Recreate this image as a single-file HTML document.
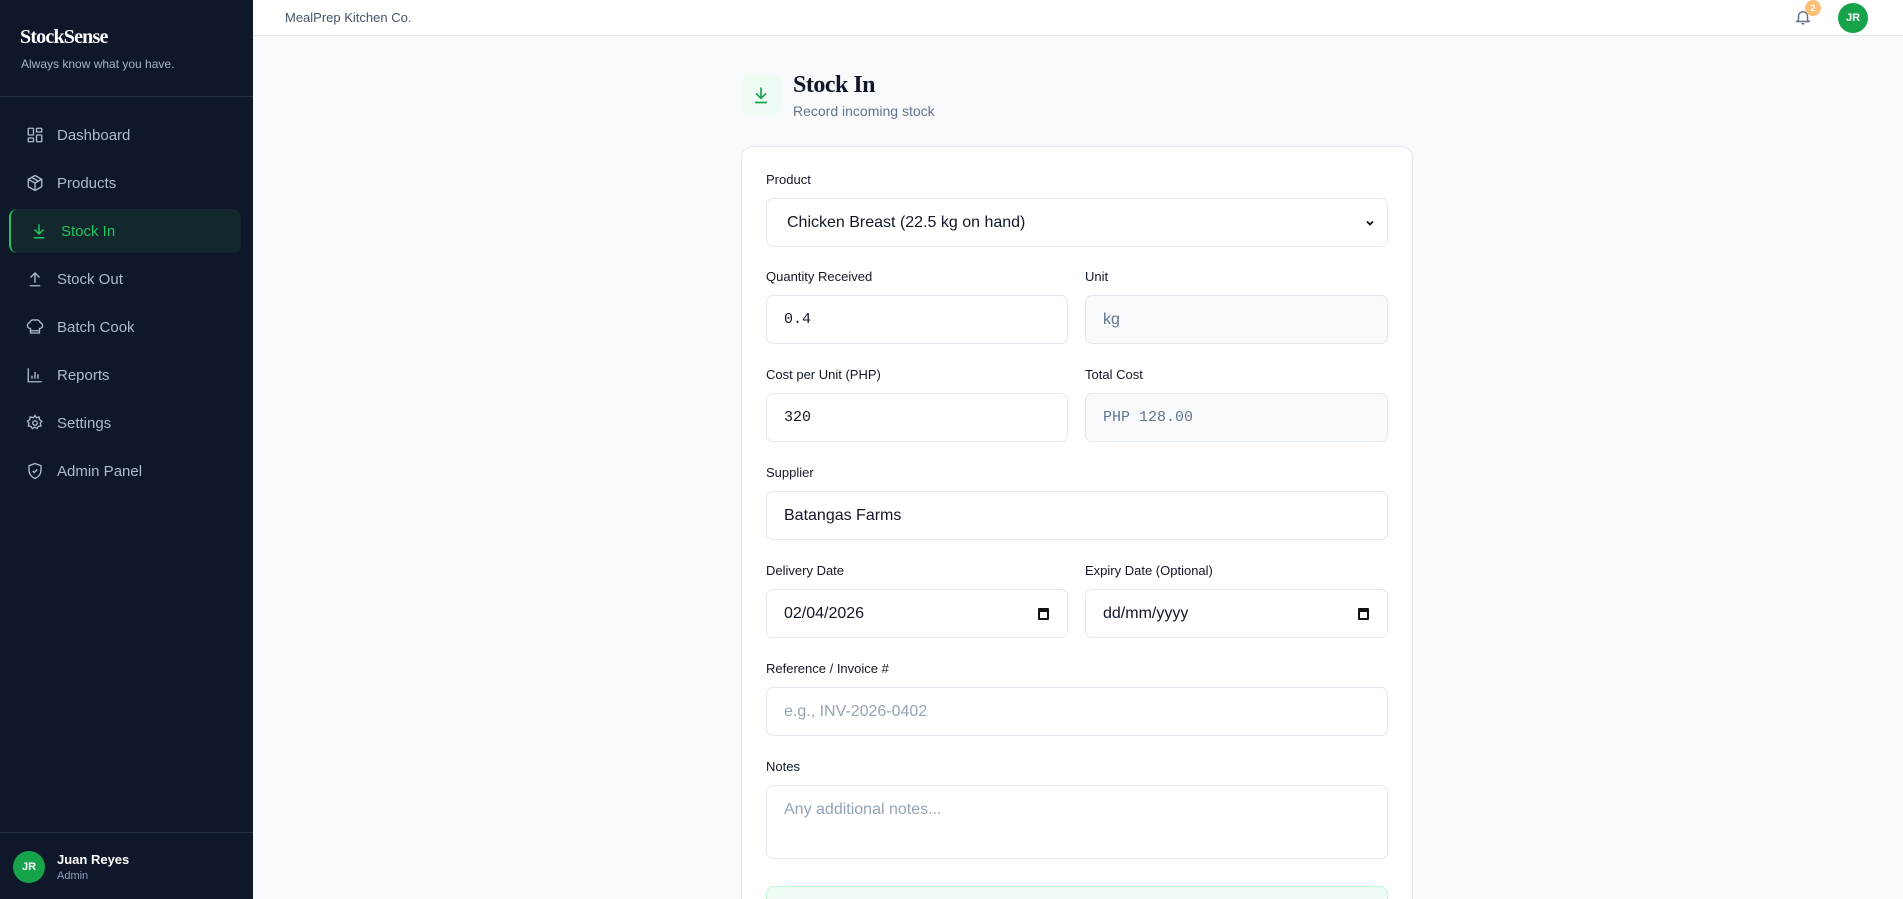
<!DOCTYPE html>
<html style="width:1903px;height:899px;overflow:hidden"><head><meta charset="utf-8"><style>
*{box-sizing:border-box;margin:0;padding:0}
body{width:1903px;height:899px;overflow:hidden;background:#f8fafc;font-family:"Liberation Sans",sans-serif;position:relative;}
.sb{position:absolute;left:0;top:0;width:253px;height:899px;background:#0f172a;}
.logo{position:absolute;left:20px;top:26px;color:#fff;font:bold 20px "Liberation Serif",serif;letter-spacing:-0.8px}
.tag{position:absolute;left:21px;top:57px;color:#a5b4c8;font-size:12px}
.div1{position:absolute;left:0;top:96px;width:253px;height:1px;background:#263246}
.nav{position:absolute;left:0;width:253px;height:44px;display:flex;align-items:center;color:#aebbd0;font-size:15px}
.nav svg{position:absolute;left:26px;width:18px;height:18px}
.nav span{position:absolute;left:57px}
.act{left:9px;width:232px;background:#13282d;border-left:2px solid #22c55e;border-radius:8px;color:#22c55e}
.act svg{left:19px}.act span{left:50px}
.div2{position:absolute;left:0;top:832px;width:253px;height:1px;background:#263246}
.av{position:absolute;border-radius:50%;background:#16a34a;color:#fff;font-weight:bold;font-size:11px;display:flex;align-items:center;justify-content:center}
.top{position:absolute;left:253px;top:0;right:0;height:36px;background:#fff;border-bottom:1px solid #e2e8f0}
.card{position:absolute;left:741px;top:146px;width:672px;height:780px;background:#fff;border:1px solid #e2e8f0;border-radius:12px}
.lbl{position:absolute;left:766px;font-size:13px;color:#111827}
.in{position:absolute;height:49px;border:1px solid #e2e8f0;border-radius:7px;background:#fff;display:flex;align-items:center;padding-left:17px;font-size:16px;color:#111827}
.mono{font-family:"Liberation Mono",monospace;font-size:15px}
.ro{background:#f8fafc;color:#64748b}
.ph{color:#94a3b8}
</style></head><body>
<div class="sb">
<div class="logo">StockSense</div>
<div class="tag">Always know what you have.</div>
<div class="div1"></div>
<div class="nav" style="top:113px"><svg viewBox="0 0 24 24" fill="none" stroke="currentColor" stroke-width="1.8"><rect x="3" y="3" width="7" height="9" rx="1"/><rect x="14" y="3" width="7" height="5" rx="1"/><rect x="14" y="12" width="7" height="9" rx="1"/><rect x="3" y="16" width="7" height="5" rx="1"/></svg><span>Dashboard</span></div>
<div class="nav" style="top:161px"><svg viewBox="0 0 24 24" fill="none" stroke="currentColor" stroke-width="1.8"><path d="M12 2l9 5v10l-9 5-9-5V7z"/><path d="M3 7l9 5 9-5M12 12v10M7.5 4.5l9 5"/></svg><span>Products</span></div>
<div class="nav act" style="top:209px"><svg viewBox="0 0 24 24" fill="none" stroke="currentColor" stroke-width="2"><path d="M12 3v13M6 10l6 6 6-6M5 21h14"/></svg><span>Stock In</span></div>
<div class="nav" style="top:257px"><svg viewBox="0 0 24 24" fill="none" stroke="currentColor" stroke-width="1.8"><path d="M12 17V4M6 10l6-6 6 6M5 21h14"/></svg><span>Stock Out</span></div>
<div class="nav" style="top:305px"><svg viewBox="0 0 24 24" fill="none" stroke="currentColor" stroke-width="1.8"><path d="M6 14a4 4 0 0 1-1-7.9A5 5 0 0 1 12 3a5 5 0 0 1 7 3.1A4 4 0 0 1 18 14v6H6z M6 17h12"/></svg><span>Batch Cook</span></div>
<div class="nav" style="top:353px"><svg viewBox="0 0 24 24" fill="none" stroke="currentColor" stroke-width="1.8"><path d="M3 3v18h18M8 17v-4M12 17V8M16 17v-6"/></svg><span>Reports</span></div>
<div class="nav" style="top:401px"><svg viewBox="0 0 24 24" fill="none" stroke="currentColor" stroke-width="1.8"><circle cx="12" cy="12" r="3"/><path d="M12 2l2 3 3.5-1 .5 3.5 3 2-2 3 1 3.5-3.5.5-2 3-3-2-3 2-2-3-3.5-.5 1-3.5-2-3 3-2 .5-3.5L10 5z"/></svg><span>Settings</span></div>
<div class="nav" style="top:449px"><svg viewBox="0 0 24 24" fill="none" stroke="currentColor" stroke-width="1.8"><path d="M12 2l8 3v6c0 5-3.5 9-8 11-4.5-2-8-6-8-11V5z"/><path d="M9 12l2 2 4-4"/></svg><span>Admin Panel</span></div>
<div class="div2"></div>
<div class="av" style="left:13px;top:851px;width:32px;height:32px">JR</div>
<div style="position:absolute;left:57px;top:852px;color:#fff;font-weight:bold;font-size:13px">Juan Reyes</div>
<div style="position:absolute;left:57px;top:870px;color:#8fa0c0;font-size:11px">Admin</div>
</div>
<div class="top">
<div style="position:absolute;left:32px;top:10px;font-size:13px;color:#475569">MealPrep Kitchen Co.</div>
<svg style="position:absolute;left:1541px;top:8px" width="18" height="18" viewBox="0 0 24 24" fill="none" stroke="#64748b" stroke-width="2"><path d="M6 16V11a6 6 0 0 1 12 0v5l2 2H4z"/><path d="M10 21h4"/></svg>
<div class="av" style="left:1552px;top:0px;width:16px;height:16px;background:#fbbf77;font-size:9px">2</div>
<div class="av" style="left:1585px;top:3px;width:30px;height:30px">JR</div>
</div>
<div style="position:absolute;left:741px;top:75px;width:40px;height:40px;border-radius:9px;background:#effcf3"><svg style="position:absolute;left:10px;top:10px" width="20" height="20" viewBox="0 0 24 24" fill="none" stroke="#16a34a" stroke-width="2"><path d="M12 3v13M6 10l6 6 6-6M5 21h14"/></svg></div>
<div style="position:absolute;left:793px;top:72px;font:bold 24px 'Liberation Serif',serif;color:#0f172a;letter-spacing:-0.5px">Stock In</div>
<div style="position:absolute;left:793px;top:103px;font-size:14px;color:#64748b">Record incoming stock</div>
<div class="card"></div>
<div class="lbl" style="top:172px">Product</div>
<div class="in" style="left:766px;top:198px;width:622px;padding-left:20px">Chicken Breast (22.5 kg on hand)<svg style="position:absolute;right:12px" width="10" height="10" viewBox="0 0 10 10" fill="none" stroke="#111" stroke-width="1.8"><path d="M2 3.5l3 3 3-3"/></svg></div>
<div class="lbl" style="top:269px">Quantity Received</div><div class="lbl" style="top:269px;left:1085px">Unit</div>
<div class="in mono" style="left:766px;top:295px;width:302px">0.4</div>
<div class="in ro" style="left:1085px;top:295px;width:303px">kg</div>
<div class="lbl" style="top:367px">Cost per Unit (PHP)</div><div class="lbl" style="top:367px;left:1085px">Total Cost</div>
<div class="in mono" style="left:766px;top:393px;width:302px">320</div>
<div class="in mono ro" style="left:1085px;top:393px;width:303px">PHP 128.00</div>
<div class="lbl" style="top:465px">Supplier</div>
<div class="in" style="left:766px;top:491px;width:622px">Batangas Farms</div>
<div class="lbl" style="top:563px">Delivery Date</div><div class="lbl" style="top:563px;left:1085px">Expiry Date (Optional)</div>
<div class="in" style="left:766px;top:589px;width:302px">02/04/2026<span style="position:absolute;right:18px;width:11px;height:12px;border:2px solid #111;border-top-width:4px;border-radius:1px"></span></div>
<div class="in" style="left:1085px;top:589px;width:303px">dd/mm/yyyy<span style="position:absolute;right:18px;width:11px;height:12px;border:2px solid #111;border-top-width:4px;border-radius:1px"></span></div>
<div class="lbl" style="top:661px">Reference / Invoice #</div>
<div class="in ph" style="left:766px;top:687px;width:622px">e.g., INV-2026-0402</div>
<div class="lbl" style="top:759px">Notes</div>
<div class="in ph" style="left:766px;top:785px;width:622px;height:74px;align-items:flex-start;padding-top:15px">Any additional notes...</div>
<div style="position:absolute;left:766px;top:886px;width:622px;height:40px;background:#f0fdf4;border:1px solid #bbf7d0;border-radius:8px"></div>
</body></html>
